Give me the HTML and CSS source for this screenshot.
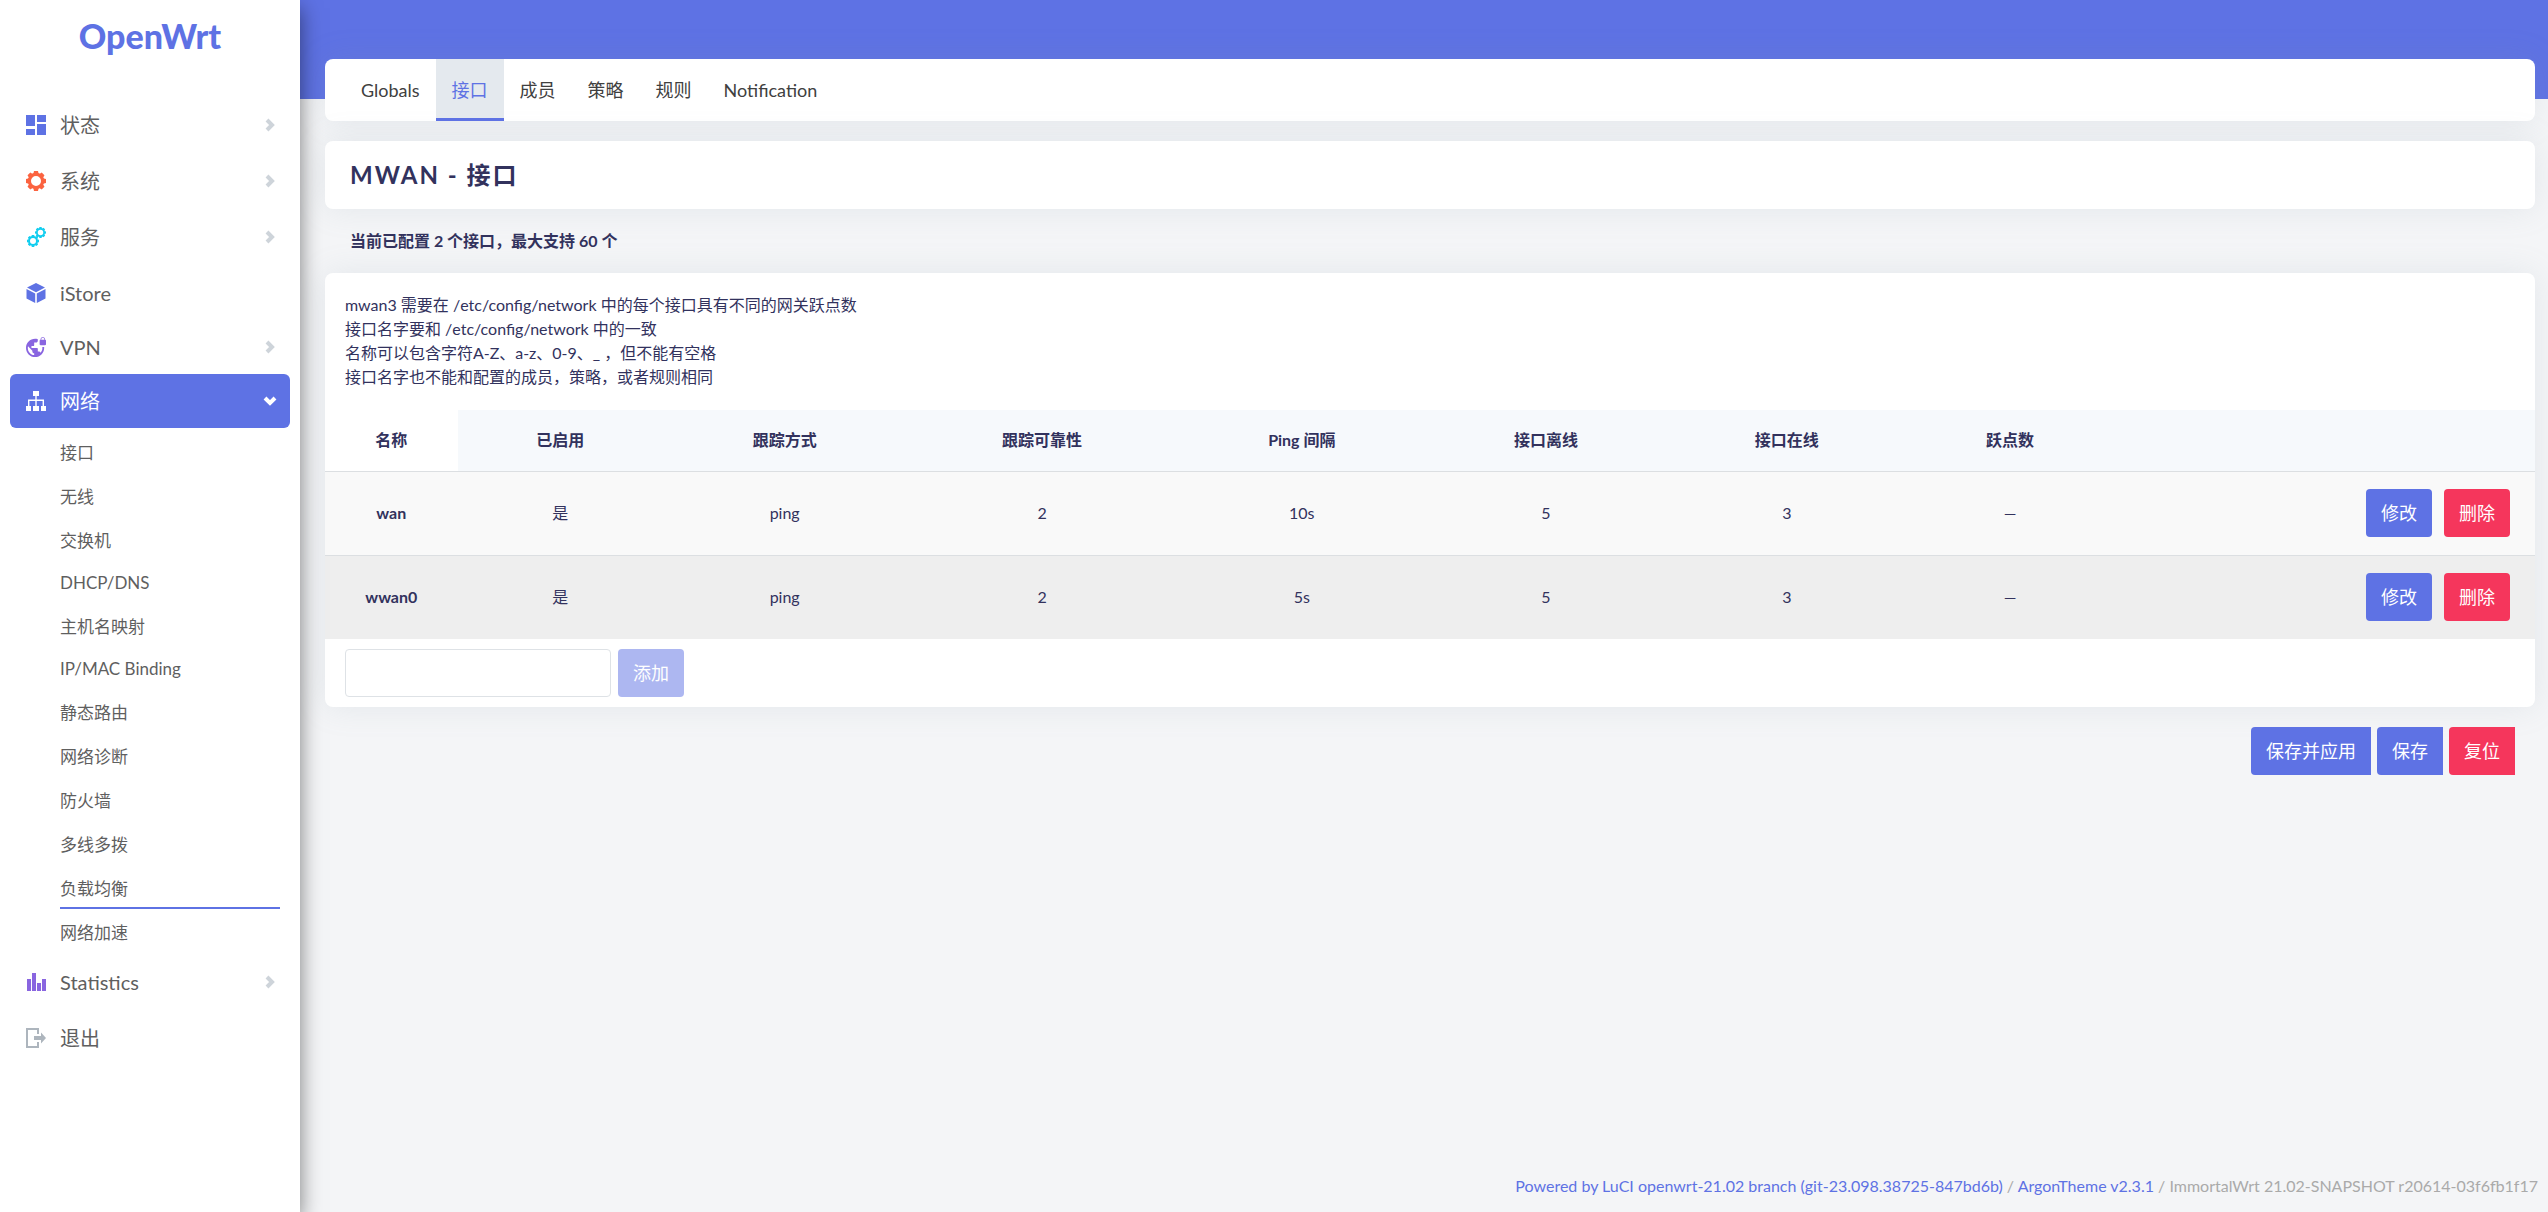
FILE: index.html
```html
<!DOCTYPE html>
<html lang="zh-CN">
<head>
<meta charset="utf-8">
<meta name="viewport" content="width=device-width, initial-scale=1">
<title>OpenWrt - 接口 - LuCI</title>
<link rel="stylesheet" href="styles.css">
</head>
<body>
<svg class="sprite" aria-hidden="true">
  <symbol id="chevron" viewBox="0 0 10 14"><path d="M2 2l5 5-5 5" fill="none" stroke="currentColor" stroke-width="4"/></symbol>
  <symbol id="gear" viewBox="-10 -10 20 20">
    <circle r="6.6" fill="none" stroke="currentColor" stroke-width="3.2"/>
    <g fill="currentColor">
      <path id="teeth" d="M-2-10h4l.7 3h-5.4zM-2 10h4l.7-3h-5.4zM-10-2v4l3 .7v-5.4zM10-2v4l-3 .7v-5.4z"/>
      <use href="#teeth" transform="rotate(45)"/>
    </g>
  </symbol>
</svg>
<div class="layout">
  <aside class="sidebar">
    <a class="brand" href="#">OpenWrt</a>
    <nav>
      <ul class="menu">
        <li class="item"><a class="link" href="#"><svg class="icon blue" viewBox="0 0 20 20"><path fill="currentColor" d="M0 0h9v11H0zM11 0h9v7h-9zM0 14h9v6H0zM11 9h9v11h-9z"/></svg>状态<svg class="arrow"><use href="#chevron"/></svg></a></li>
        <li class="item"><a class="link" href="#"><svg class="icon orange"><use href="#gear"/></svg>系统<svg class="arrow"><use href="#chevron"/></svg></a></li>
        <li class="item"><a class="link" href="#"><svg class="icon cyan" viewBox="0 0 20 20"><use href="#gear" x="1" y="8" width="12" height="12"/><use href="#gear" x="9" y="0" width="11" height="11"/></svg>服务<svg class="arrow"><use href="#chevron"/></svg></a></li>
        <li class="item tight"><a class="link" href="#"><svg class="icon blue" viewBox="0 0 20 20"><path fill="currentColor" d="M10 0l9 4.600-9 4.600-9-4.600zM.500 6l8.700 4.400V20L.500 15.500zM19.500 6l-8.700 4.400V20l8.700-4.500z"/></svg>iStore</a></li>
        <li class="item tight"><a class="link" href="#"><svg class="icon purple" viewBox="1 1 22 22"><path fill="currentColor" d="M22 4v-.5C22 2.120 20.880 1 19.500 1S17 2.120 17 3.500V4c-.55 0-1 .45-1 1v4c0 .55.45 1 1 1h5c.55 0 1-.45 1-1V5c0-.55-.45-1-1-1zm-.8 0h-3.400v-.5c0-.94.76-1.700 1.700-1.700s1.700.76 1.700 1.700V4zm-2.280 8c.04.33.08.66.08 1 0 2.080-.8 3.970-2.100 5.390-.26-.81-1-1.390-1.900-1.390h-1v-3c0-.55-.45-1-1-1H7v-2h2c.55 0 1-.45 1-1V7h2c1.100 0 2-.9 2-2V3.460c-.95-.3-1.950-.46-3-.46C5.480 3 1 7.480 1 13s4.480 10 10 10 10-4.480 10-10c0-.34-.02-.67-.05-1h-2.030zM10 20.930c-3.950-.49-7-3.850-7-7.930 0-.62.08-1.210.21-1.790L8 16v1c0 1.100.9 2 2 2v1.930z"/></svg>VPN<svg class="arrow"><use href="#chevron"/></svg></a></li>
        <li class="item tight"><a class="link active" href="#"><svg class="icon" viewBox="0 0 20 20"><path fill="currentColor" d="M7 0h6v5h-2.300v3.500H18V15h2v5h-5v-5h1.600v-5h-5.900v5H13v5H7v-5h2.300v-5H3.400v5H5v5H0v-5h2V8.500h7.300V5H7z"/></svg>网络<svg class="arrow down"><use href="#chevron"/></svg></a>
          <ul class="submenu">
            <li><a href="#">接口</a></li>
            <li><a href="#">无线</a></li>
            <li><a href="#">交换机</a></li>
            <li class="tight"><a href="#">DHCP/DNS</a></li>
            <li><a href="#">主机名映射</a></li>
            <li class="tight"><a href="#">IP/MAC Binding</a></li>
            <li><a href="#">静态路由</a></li>
            <li><a href="#">网络诊断</a></li>
            <li><a href="#">防火墙</a></li>
            <li><a href="#">多线多拨</a></li>
            <li><a class="current" href="#">负载均衡</a></li>
            <li><a href="#">网络加速</a></li>
          </ul>
        </li>
        <li class="item"><a class="link" href="#"><svg class="icon purple" viewBox="0 0 20 20"><path fill="currentColor" d="M1 7h4v12H1zM6 1h4v18H6zM11 11h4v8h-4zM16 7h4v12h-4z"/></svg>Statistics<svg class="arrow"><use href="#chevron"/></svg></a></li>
        <li class="item"><a class="link" href="#"><svg class="icon grey" viewBox="0 0 20 20"><path fill="none" stroke="currentColor" stroke-width="2" d="M12 6V1H1v18h11v-5"/><path fill="currentColor" d="M8 8h7V4.500l5 5.500-5 5.500V12H8z"/></svg>退出</a></li>
      </ul>
    </nav>
  </aside>
  <div class="page">
    <header class="banner"></header>
    <main class="content">
      <nav class="card tabs">
        <a href="#">Globals</a>
        <a class="active" href="#">接口</a>
        <a href="#">成员</a>
        <a href="#">策略</a>
        <a href="#">规则</a>
        <a href="#">Notification</a>
      </nav>
      <h2 class="card title">MWAN - 接口</h2>
      <p class="notice">当前已配置 2 个接口，最大支持 60 个</p>
      <form>
        <section class="card">
          <p class="description">mwan3 需要在 /etc/config/network 中的每个接口具有不同的网关跃点数<br>接口名字要和 /etc/config/network 中的一致<br>名称可以包含字符A-Z、a-z、0-9、_ ，但不能有空格<br>接口名字也不能和配置的成员，策略，或者规则相同</p>
          <table class="table">
            <colgroup><col class="c-name"><col class="c-enabled"><col class="c-method"><col class="c-reliability"><col class="c-interval"><col class="c-down"><col class="c-up"><col class="c-metric"><col></colgroup>
            <thead>
              <tr><th>名称</th><th>已启用</th><th>跟踪方式</th><th>跟踪可靠性</th><th>Ping 间隔</th><th>接口离线</th><th>接口在线</th><th>跃点数</th><th></th></tr>
            </thead>
            <tbody>
              <tr><th>wan</th><td>是</td><td>ping</td><td>2</td><td>10s</td><td>5</td><td>3</td><td>—</td><td><div class="row-actions"><button class="btn" type="button">修改</button><button class="btn danger" type="button">删除</button></div></td></tr>
              <tr><th>wwan0</th><td>是</td><td>ping</td><td>2</td><td>5s</td><td>5</td><td>3</td><td>—</td><td><div class="row-actions"><button class="btn" type="button">修改</button><button class="btn danger" type="button">删除</button></div></td></tr>
            </tbody>
          </table>
          <div class="add-row">
            <input class="field" type="text" aria-label="名称">
            <button class="btn" type="button" disabled>添加</button>
          </div>
        </section>
        <div class="page-actions">
          <button class="btn" type="button">保存并应用</button>
          <button class="btn" type="button">保存</button>
          <button class="btn danger" type="button">复位</button>
        </div>
      </form>
    </main>
    <footer class="footer"><a href="#">Powered by LuCI openwrt-21.02 branch (git-23.098.38725-847bd6b)</a> / <a href="#">ArgonTheme v2.3.1</a> / ImmortalWrt 21.02-SNAPSHOT r20614-03f6fb1f17</footer>
  </div>
</div>
</body>
</html>
```
FILE: styles.css
```css
:root {
  --primary: #5e72e4;
  --danger: #f5365c;
  --ink: #32325d;
}

* { box-sizing: border-box; }

body {
  margin: 0;
  background: #f4f5f7;
  color: var(--ink);
  font: 16px/24px Lato, "Noto Sans CJK SC", sans-serif;
}

a { color: inherit; text-decoration: none; }
ul { margin: 0; padding: 0; list-style: none; }
h2, p { margin: 0; }
.sprite { display: none; }

.layout { display: flex; min-height: 100vh; }

/* Sidebar */
.sidebar {
  position: relative;
  flex: 0 0 300px;
  background: #fff;
  box-shadow: 0 8px 20px rgba(0, 0, 0, .5);
  color: #5f5f5f;
}
.brand {
  display: block;
  height: 98px;
  padding-top: 16px;
  color: var(--primary);
  font-size: 34px;
  font-weight: 900;
  line-height: 40px;
  text-align: center;
}
.item { margin: 0 10px 2px; }
.item.tight { margin-bottom: 0; }
.link {
  display: flex;
  align-items: center;
  height: 54px;
  padding: 0 15px 0 16px;
  border-radius: 6px;
  font-size: 20px;
}
.link.active { background: var(--primary); color: #fff; }
.icon { width: 20px; height: 20px; margin-right: 14px; }
.arrow { width: 10px; height: 14px; margin-left: auto; color: #ced4da; }
.arrow.down { color: #fff; transform: rotate(90deg); }
.blue { color: #5e72e4; }
.orange { color: #fb6340; }
.cyan { color: #11cdef; }
.purple { color: #8965e0; }
.grey { color: #adb5bd; }

.submenu { padding: 3px 10px 0 50px; font-size: 17px; }
.submenu a { display: block; height: 42px; line-height: 44px; }
.submenu li { padding-bottom: 2px; }
.submenu li.tight { padding-bottom: 0; }
.submenu li.tight a { line-height: 40px; }
.submenu .current { border-bottom: 2px solid var(--primary); }

/* Page */
.page { display: flex; flex: 1; flex-direction: column; min-width: 0; }
.banner { height: 99px; background: var(--primary); }
.content { margin-top: -40px; padding: 0 13px 0 25px; }
.card {
  margin-bottom: 20px;
  border-radius: 8px;
  background: #fff;
  box-shadow: 0 0 32px rgba(136, 152, 170, .15);
}

.tabs { display: flex; padding: 0 20px; color: #404040; font-size: 18px; }
.tabs a { height: 62px; padding: 0 16px; line-height: 62px; }
.tabs .active {
  border-bottom: 3px solid var(--primary);
  background: #e4e9ee;
  color: var(--primary);
}

.title {
  padding: 18px 25px;
  font-size: 24px;
  font-weight: 700;
  letter-spacing: 2px;
  line-height: 32px;
}
.notice { padding: 0 25px 20px; font-weight: 700; }
.description { padding: 20px 20px 21px; }

/* Interface table */
.table {
  width: 100%;
  border-collapse: collapse;
  table-layout: fixed;
  text-align: center;
}
.c-name { width: 6%; }
.c-enabled, .c-metric { width: 9.3%; }
.c-method { width: 11%; }
.c-reliability { width: 12.3%; }
.c-interval { width: 11.2%; }
.c-down, .c-up { width: 10.9%; }
.table th, .table td { padding: 0; }
.table thead tr { height: 61px; }
.table thead th { background: #f6f9fc; }
.table thead th:first-child { background: #fff; }
.table tbody tr {
  height: 84px;
  border-top: 1px solid #dcdfe2;
  background: #f9f9f9;
}
.table tbody tr:nth-child(even) { background: #eee; }
.row-actions { display: flex; justify-content: flex-end; gap: 12px; padding-right: 25px; }

.btn {
  height: 48px;
  padding: 0 15px;
  border: 0;
  border-radius: 4px;
  background: var(--primary);
  color: #fff;
  font: inherit;
  font-size: 18px;
}
.btn.danger { background: var(--danger); }
.btn:disabled { opacity: .5; }

.add-row { display: flex; gap: 7px; padding: 10px 20px; }
.field {
  width: 266px;
  height: 48px;
  padding: 0 12px;
  border: 1px solid #dee2e6;
  border-radius: 4px;
  background: #fff;
  font: inherit;
}
.page-actions { display: flex; justify-content: flex-end; gap: 6px; padding: 0 20px; }
.page-actions .btn { border-radius: 4px 0 0 4px; }

.footer {
  margin-top: auto;
  padding: 14px 10px;
  color: #aaa;
  text-align: right;
}
.footer a { color: var(--primary); }
```
